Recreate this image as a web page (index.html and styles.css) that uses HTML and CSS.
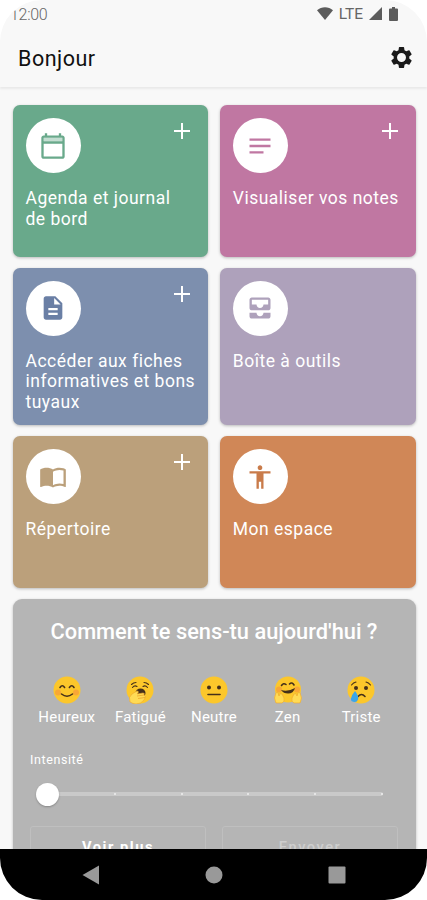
FILE: index.html
```html
<!DOCTYPE html>
<html lang="fr">
<head>
    <meta charset="UTF-8">
    <meta name="viewport" content="width=device-width, initial-scale=1.0">
    <title>Bonjour</title>
    <link rel="stylesheet" href="styles.css">
</head>
<body>
    <div class="phone">
        <div class="status-bar">
            <span class="time"><span class="time-first">1</span>2:00</span>
            <div class="status-icons">
                <svg class="wifi" viewBox="0 0 16 13"><path d="M0 3.2C4.5-.7 11.500-.7 16 3.200L8 13z"/></svg>
                <span>LTE</span>
                <svg class="signal" viewBox="0 0 13 13"><path d="M0 13L13 0v13z"/></svg>
                <svg class="battery" viewBox="0 0 9 14"><path d="M3 0h3v1.500h2q1 0 1 1V13q0 1-1 1H1q-1 0-1-1V2.500q0-1 1-1h2z"/></svg>
            </div>
        </div>

        <header class="app-bar">
            <h1>Bonjour</h1>
            <svg class="settings" viewBox="0 0 24 24"><path d="M19.430 12.980c.04-.32.07-.64.07-.98 0-.34-.03-.66-.07-.98l2.110-1.650c.19-.15.24-.42.12-.64l-2-3.460c-.12-.22-.39-.3-.61-.22l-2.490 1c-.52-.4-1.080-.73-1.690-.98l-.38-2.650C14.460 2.180 14.250 2 14 2h-4c-.25 0-.46.18-.49.42l-.38 2.650c-.61.25-1.170.59-1.690.98l-2.490-1c-.23-.09-.49 0-.61.22l-2 3.460c-.13.22-.07.49.12.64l2.110 1.650c-.04.32-.07.65-.07.98 0 .33.03.66.07.98l-2.110 1.650c-.19.15-.24.42-.12.64l2 3.460c.12.22.39.3.61.22l2.490-1c.52.4 1.080.73 1.690.98l.38 2.650c.03.24.24.42.49.42h4c.25 0 .46-.18.49-.42l.38-2.650c.61-.25 1.170-.59 1.690-.98l2.490 1c.23.09.49 0 .61-.22l2-3.460c.12-.22.07-.49-.12-.64zM12 16.300a4.300 4.300 0 1 1 0-8.600 4.300 4.300 0 0 1 0 8.600z"/></svg>
        </header>

        <main class="content">
            <section class="grid">
                <a class="card agenda">
                    <div class="card-top">
                        <span class="icon"><svg viewBox="0 0 24 24"><path d="M20 3h-1V1h-2v2H7V1H5v2H4c-1.100 0-2 .9-2 2v16c0 1.100.9 2 2 2h16c1.100 0 2-.9 2-2V5c0-1.100-.9-2-2-2zm0 2v3H4V5h16zM4 21V10h16v11H4z"/><path opacity=".4" d="M4 5h16v3H4z"/></svg></span>
                        <svg class="plus" viewBox="0 0 16 16"><path d="M8 0v16M0 8h16"/></svg>
                    </div>
                    <p>Agenda et journal<br>de bord</p>
                </a>
                <a class="card notes">
                    <div class="card-top">
                        <span class="icon"><svg viewBox="0 0 24 24"><path d="M3 5.500h18v2H3zM3 11h18v2H3zM3 16.500h12v2H3z"/></svg></span>
                        <svg class="plus" viewBox="0 0 16 16"><path d="M8 0v16M0 8h16"/></svg>
                    </div>
                    <p>Visualiser vos notes</p>
                </a>
                <a class="card fiches">
                    <div class="card-top">
                        <span class="icon"><svg viewBox="0 0 24 24"><path d="M14 2H6c-1.100 0-2 .9-2 2v16c0 1.100.9 2 2 2h12c1.100 0 2-.9 2-2V8l-6-6zm2 16H8v-2h8v2zm0-4H8v-2h8v2zm-3-5V3.500L18.500 9H13z"/></svg></span>
                        <svg class="plus" viewBox="0 0 16 16"><path d="M8 0v16M0 8h16"/></svg>
                    </div>
                    <p>Accéder aux fiches informatives et bons tuyaux</p>
                </a>
                <a class="card outils">
                    <div class="card-top">
                        <span class="icon"><svg viewBox="0 0 24 24"><path d="M19 3H5c-1.100 0-2 .9-2 2v7c0 1.100.9 2 2 2h14c1.100 0 2-.9 2-2V5c0-1.100-.9-2-2-2zm0 6h-4c0 1.620-1.380 3-3 3s-3-1.380-3-3H5V5h14v4zm-4 7h6v3c0 1.100-.9 2-2 2H5c-1.100 0-2-.9-2-2v-3h6c0 1.660 1.340 3 3 3s3-1.340 3-3z"/></svg></span>
                    </div>
                    <p>Boîte à outils</p>
                </a>
                <a class="card repertoire">
                    <div class="card-top">
                        <span class="icon"><svg viewBox="0 0 24 24"><path d="M21 4.500c-1.110-.35-2.330-.5-3.500-.5-1.950 0-4.050.4-5.500 1.500-1.450-1.100-3.550-1.500-5.500-1.500S2.450 4.400 1 5.500v14.650c0 .25.25.5.5.5.1 0 .15-.05.25-.05C3.100 19.950 5.050 19.500 6.500 19.500c1.950 0 4.050.4 5.500 1.500 1.350-.85 3.800-1.500 5.500-1.500 1.650 0 3.350.3 4.750 1.050.1.05.15.05.25.05.25 0 .5-.25.5-.5V5.500c-.6-.45-1.250-.75-2-1zm0 13.500c-1.100-.35-2.300-.5-3.500-.5-1.700 0-4.150.65-5.500 1.500V7.500c1.350-.85 3.800-1.500 5.500-1.500 1.200 0 2.400.15 3.500.5v11.500z"/></svg></span>
                        <svg class="plus" viewBox="0 0 16 16"><path d="M8 0v16M0 8h16"/></svg>
                    </div>
                    <p>Répertoire</p>
                </a>
                <a class="card espace">
                    <div class="card-top">
                        <span class="icon"><svg viewBox="0 0 24 24"><path d="M12 2c1.100 0 2 .9 2 2s-.9 2-2 2-2-.9-2-2 .9-2 2-2zm9 7h-6v13h-2v-6h-2v6H9V9H3V7h18v2z"/></svg></span>
                    </div>
                    <p>Mon espace</p>
                </a>
            </section>

            <section class="mood">
                <h2>Comment te sens-tu aujourd'hui ?</h2>
                <div class="mood-list">
                    <div class="mood-item">
                        <svg viewBox="0 0 28 28">
                            <circle class="face" cx="14" cy="14" r="13.500"/>
                            <circle class="cheek" cx="5" cy="16.500" r="3"/>
                            <circle class="cheek" cx="23" cy="16.500" r="3"/>
                            <path class="line" d="M7 11.500q2.300-3.600 4.600 0M16.400 11.500q2.300-3.600 4.600 0M8.500 18q5.500 4.500 11 0"/>
                        </svg>
                        <span>Heureux</span>
                    </div>
                    <div class="mood-item">
                        <svg viewBox="0 0 28 28">
                            <circle class="face" cx="14" cy="14" r="13.500"/>
                            <path class="line thin" d="M5.500 8.500q2-2 4.500-2M18 6.500q2.500 0 4.500 2M6.500 11.500q2-2.500 4.500-1M17 10.500q2.500-1.500 4.500 1"/>
                            <ellipse class="mouth" cx="14.500" cy="17" rx="5" ry="4.500"/>
                            <path class="hand" d="M4 26q-2-5 2-8l5-3q2 0 1 2l-1 1 6-1q2 0 1 2l1 1q1 1 0 2l-1 2q-3 4-8 4-3 0-6-2z"/>
                            <path class="hand-line" d="M11 20l7-1M12 22.500l7-1"/>
                        </svg>
                        <span>Fatigué</span>
                    </div>
                    <div class="mood-item">
                        <svg viewBox="0 0 28 28">
                            <circle class="face" cx="14" cy="14" r="13.500"/>
                            <circle class="eye" cx="9" cy="11.500" r="2"/>
                            <circle class="eye" cx="19" cy="11.500" r="2"/>
                            <path class="line" d="M8 18.500h12"/>
                        </svg>
                        <span>Neutre</span>
                    </div>
                    <div class="mood-item">
                        <svg viewBox="0 0 28 28">
                            <circle class="face" cx="14" cy="13.500" r="13"/>
                            <circle class="cheek" cx="5" cy="13.500" r="3"/>
                            <circle class="cheek" cx="23" cy="13.500" r="3"/>
                            <path class="line" d="M7.500 9.500q2-3 4.500-1M15.500 8q2.500-2.500 4.500 1"/>
                            <path class="mouth" d="M7 14q7 2 14-2-1.500 5.500-7 5.500-4.500 0-7-3.500z"/>
                            <path class="hand" d="M2 27q-3-5 0-10 1-2 2 0l1 3q1-4 3-2l2 4q1 4-2 5zM26 27q3-5 0-10-1-2-2 0l-1 3q-1-4-3-2l-2 4q-1 4 2 5z"/>
                        </svg>
                        <span>Zen</span>
                    </div>
                    <div class="mood-item">
                        <svg viewBox="0 0 28 28">
                            <circle class="face" cx="14" cy="14" r="13.500"/>
                            <circle class="eye" cx="9" cy="12" r="2"/>
                            <circle class="eye" cx="19" cy="12" r="2"/>
                            <path class="line thin" d="M4.500 9q2-2.500 4.500-3M19 6q2.500.5 4.500 3"/>
                            <path class="line" d="M11 20.500q3.500-4 7 0"/>
                            <path class="tear" d="M8 15q4 5 3 8.500-1 3-4 2.500-3.500-.5-3-3.500Q4.500 19 8 15z"/>
                        </svg>
                        <span>Triste</span>
                    </div>
                </div>

                <label class="intensity">Intensité</label>
                <div class="slider">
                    <span class="thumb"></span>
                    <span class="tick"></span>
                    <span class="tick"></span>
                    <span class="tick"></span>
                    <span class="tick"></span>
                    <span class="tick"></span>
                    <span class="tick"></span>
                </div>

                <div class="actions">
                    <button>Voir plus</button>
                    <button class="disabled">Envoyer</button>
                </div>
            </section>
        </main>

        <nav class="nav-bar">
            <svg viewBox="0 0 18 20"><path d="M17 .5v19L.5 10z"/></svg>
            <svg viewBox="0 0 18 20"><circle cx="9" cy="10" r="8.500"/></svg>
            <svg viewBox="0 0 18 20"><rect x=".5" y="1.500" width="17" height="17" rx="1"/></svg>
        </nav>
    </div>
</body>
</html>
```
FILE: styles.css
```css
* {
    margin: 0;
    padding: 0;
    box-sizing: border-box;
}

body {
    font-family: Roboto, "Liberation Sans", sans-serif;
    background-color: #fff;
}

svg {
    display: block;
}

.phone {
    height: 900px;
    display: flex;
    flex-direction: column;
    overflow: hidden;
    background-color: #f8f8f8;
    border-radius: 42px;
}

/* Status bar */
.status-bar {
    height: 28px;
    flex-shrink: 0;
    padding: 0 29px 0 10px;
    display: flex;
    justify-content: space-between;
    align-items: center;
    font-size: 15.5px;
    color: #666;
}

.time {
    font-size: 16px;
    font-weight: 300;
    letter-spacing: -0.3px;
}

.time-first {
    display: inline-block;
    clip-path: inset(6px 0 0 0);
}

.status-icons {
    display: flex;
    align-items: center;
    gap: 6px;
    margin-top: -1px;
}

.status-icons svg {
    fill: #5c5c5c;
}

.wifi {
    width: 16px;
    height: 13px;
}

.signal {
    width: 13px;
    height: 13px;
}

.battery {
    width: 9px;
    height: 14px;
    margin-left: 1px;
}

/* App bar */
.app-bar {
    height: 59px;
    flex-shrink: 0;
    padding: 1px 13px 0 18px;
    display: flex;
    justify-content: space-between;
    align-items: center;
    box-shadow: 0 2px 2px rgba(0, 0, 0, 0.06);
}

.app-bar h1 {
    font-size: 21.5px;
    font-weight: 400;
    letter-spacing: 0.5px;
    color: #111;
}

.settings {
    width: 25px;
    height: 25px;
    margin-bottom: 2px;
    fill: #1a1a1a;
}

/* Cards */
.content {
    flex: 1;
    min-height: 0;
    overflow: hidden;
    padding: 18px 11.5px 0 12.5px;
}

.grid {
    display: grid;
    grid-template-columns: 1fr 1fr;
    grid-auto-rows: minmax(151.5px, auto);
    gap: 11px 11.5px;
}

.card {
    padding: 13px 10px 13px 13px;
    border-radius: 7px;
    color: #fff;
    box-shadow: 0 1px 3px rgba(0, 0, 0, 0.25);
}

.card-top {
    display: flex;
    justify-content: space-between;
    margin-bottom: 15px;
}

.icon {
    width: 55px;
    height: 55px;
    display: flex;
    align-items: center;
    justify-content: center;
    background-color: #fff;
    border-radius: 50%;
}

.icon svg {
    width: 28px;
    height: 28px;
    fill: currentColor;
}

.plus {
    width: 16px;
    height: 16px;
    margin: 5px 8px 0 0;
    stroke: #fff;
    stroke-width: 2;
}

.card p {
    font-size: 17.5px;
    line-height: 20.5px;
    letter-spacing: 0.5px;
    margin-right: -5px;
}

.agenda {
    background-color: #69a98b;
}

.agenda .icon {
    color: #69a98b;
}

.notes {
    background-color: #c077a2;
}

.notes .icon {
    color: #c077a2;
}

.fiches {
    background-color: #7d8fae;
}

.fiches .icon {
    color: #6a7fa5;
}

.outils {
    background-color: #aea1bb;
}

.outils .icon {
    color: #aea1bb;
}

.repertoire {
    background-color: #bba07b;
}

.repertoire .icon {
    color: #bba07b;
}

.espace {
    background-color: #d08757;
}

.espace .icon {
    color: #c97b4a;
}

/* Mood */
.mood {
    height: 320px;
    margin-top: 11px;
    padding: 20.5px 17.5px;
    border-radius: 9px;
    background-color: #b5b5b5;
    color: #fff;
    box-shadow: 0 1px 3px rgba(0, 0, 0, 0.25);
}

.mood h2 {
    font-size: 21.8px;
    line-height: 26px;
    font-weight: 500;
    text-align: center;
    white-space: nowrap;
}

.mood-list {
    display: flex;
    margin-top: 31px;
}

.mood-item {
    flex: 1;
    display: flex;
    flex-direction: column;
    align-items: center;
    font-size: 15px;
    line-height: 18px;
    letter-spacing: 0.2px;
}

.mood-item svg {
    width: 28px;
    height: 28px;
    margin-bottom: 4px;
}

.face {
    fill: #fcc72b;
}

.cheek {
    fill: #f79a3c;
    opacity: 0.7;
}

.eye,
.mouth {
    fill: #45301a;
}

.line {
    fill: none;
    stroke: #45301a;
    stroke-width: 1.6;
    stroke-linecap: round;
}

.thin {
    stroke-width: 1.1;
}

.hand {
    fill: #ffdb55;
    stroke: #eda52b;
    stroke-width: 0.6;
}

.hand-line {
    fill: none;
    stroke: #eda52b;
    stroke-width: 0.8;
}

.tear {
    fill: #3ba6e8;
}

.intensity {
    display: block;
    margin-top: 26px;
    font-size: 12.5px;
    line-height: 16px;
    letter-spacing: 0.6px;
}

.slider {
    position: relative;
    display: flex;
    justify-content: space-between;
    align-items: center;
    height: 4px;
    margin: 24px 15px 0 17px;
    background-color: #c9c9c9;
    border-radius: 2px;
}

.thumb {
    position: absolute;
    left: -11px;
    width: 23px;
    height: 23px;
    background-color: #fff;
    border-radius: 50%;
    box-shadow: 0 1px 2px rgba(0, 0, 0, 0.25);
}

.tick {
    width: 2px;
    height: 2px;
    background-color: #eee;
    border-radius: 50%;
}

.actions {
    display: flex;
    gap: 16px;
    margin-top: 30px;
}

.actions button {
    flex: 1;
    height: 42px;
    background: none;
    border: 1px solid #bfbfbf;
    border-radius: 3px;
    font-family: inherit;
    font-size: 14.7px;
    font-weight: 700;
    letter-spacing: 1.5px;
    color: #fff;
}

.actions .disabled {
    font-weight: 500;
    color: #cecece;
}

/* Navigation bar */
.nav-bar {
    height: 51px;
    flex-shrink: 0;
    display: flex;
    justify-content: center;
    align-items: center;
    gap: 105px;
    background-color: #000;
}

.nav-bar svg {
    width: 18px;
    height: 20px;
    fill: #999;
}
```
